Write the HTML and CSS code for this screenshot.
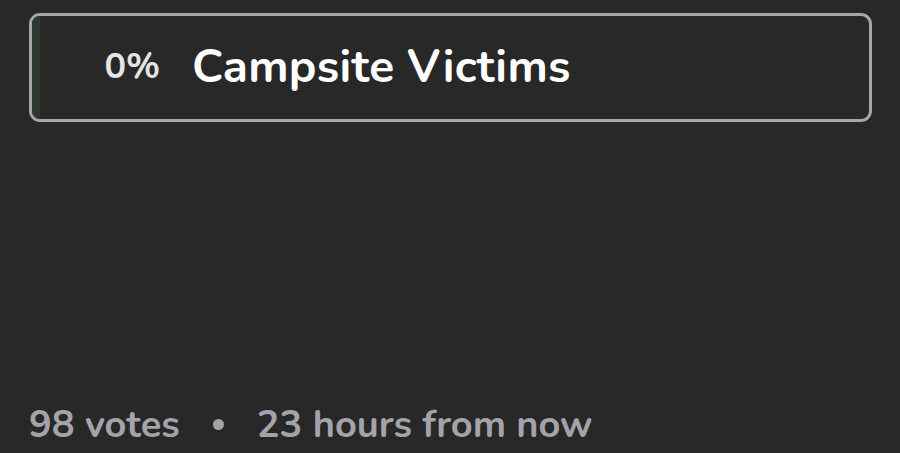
FILE: index.html
```html
<!DOCTYPE html>
<html lang="en">
<head>
  <meta name="viewport" content="width=device-width, initial-scale=1.0">
  <title>Poll</title>
  <link rel="stylesheet" href="styles.css">
</head>
<body>
  <div class="poll">
    <!-- poll option -->
    <div class="option">
      <div class="option-bar" style="width: 0%"></div>
      <span class="option-pct">0%</span>
      <span class="option-name">Campsite Victims</span>
    </div>

    <!-- meta -->
    <div class="poll-meta">
      <span>98 votes</span>
      <span class="dot"></span>
      <span>23 hours from now</span>
    </div>
  </div>
</body>
</html>
```

FILE: styles.css
```css
html, body {
  margin: 0;
  padding: 0;
  background-color: #282828;
}
body {
  font-family: 'Nunito', 'Lato', 'Open Sans', sans-serif;
  font-weight: 700;
}
.poll {
  height: 453px;
  box-sizing: border-box;
  padding: 13px 28px 0 29px;
  display: flex;
  flex-direction: column;
}
.option {
  position: relative;
  height: 109px;
  box-sizing: border-box;
  padding-bottom: 3px;
  border: 3px solid #a6a6ab;
  border-radius: 11px;
  display: flex;
  align-items: center;
  overflow: hidden;
}
.option-bar {
  position: absolute;
  left: 0;
  top: 0;
  bottom: 0;
  min-width: 8px;
  background-color: #2f3a31;
}
.option-pct {
  position: relative;
  width: 160px;
  padding-right: 32px;
  box-sizing: border-box;
  text-align: right;
  font-size: 36px;
  color: #e4e4e4;
}
.option-name {
  position: relative;
  font-size: 46px;
  color: #ffffff;
  letter-spacing: 0.3px;
}
.poll-meta {
  margin-top: auto;
  margin-bottom: 3px;
  display: flex;
  align-items: center;
  gap: 33px;
  font-size: 38px;
  color: #a3a3a9;
}
.dot {
  width: 11px;
  height: 11px;
  border-radius: 50%;
  background-color: #a3a3a9;
}
```
